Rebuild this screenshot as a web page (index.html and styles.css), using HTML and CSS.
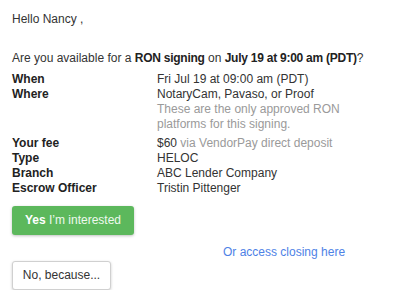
FILE: index.html
```html
<!DOCTYPE html>
<html>
<head>
<meta charset="utf-8">
<link rel="stylesheet" href="styles.css">
</head>
<body>
<div class="mail">
  <p class="greeting">Hello Nancy ,</p>
  <p class="ask">Are you available for a <b>RON signing</b> on <b>July 19 at 9:00 am (PDT)</b>?</p>
  <div class="details">
    <div class="label">When</div>
    <div class="value">Fri Jul 19 at 09:00 am (PDT)</div>
    <div class="label">Where</div>
    <div class="value">NotaryCam, Pavaso, or Proof
      <div class="note">These are the only approved RON<br>platforms for this signing.</div>
    </div>
    <div class="label">Your fee</div>
    <div class="value">$60 <span class="muted">via VendorPay direct deposit</span></div>
    <div class="label">Type</div>
    <div class="value">HELOC</div>
    <div class="label">Branch</div>
    <div class="value">ABC Lender Company</div>
    <div class="label">Escrow Officer</div>
    <div class="value">Tristin Pittenger</div>
  </div>
  <div class="actions">
    <a class="btn btn-yes" href="#"><span class="yes">Yes</span> I’m interested</a>
    <a class="access" href="#">Or access closing here</a>
    <a class="btn btn-no" href="#">No, because...</a>
  </div>
</div>
</body>
</html>
```
FILE: styles.css
```css
html, body {
  margin: 0;
  padding: 0;
  background: #ffffff;
}
.mail {
  font-family: "Liberation Sans", Arial, sans-serif;
  font-size: 12px;
  line-height: 15px;
  color: #333333;
  padding: 12px 0 0 12px;
}
.greeting {
  margin: 0;
}
.ask {
  margin: 24px 0 0 0;
  white-space: nowrap;
}
.ask b {
  color: #222222;
  letter-spacing: -0.25px;
}
.details {
  margin-top: 6px;
  display: grid;
  grid-template-columns: 145px auto;
}
.label {
  font-weight: bold;
  color: #222222;
}
.value {
  color: #333333;
}
.note {
  color: #9a9a9a;
  margin-bottom: 4px;
}
.muted {
  color: #9a9a9a;
}
.actions {
  margin-top: 10px;
  display: flex;
  flex-direction: column;
  align-items: flex-start;
}
.btn {
  display: inline-block;
  text-decoration: none;
  border-radius: 3px;
  box-sizing: border-box;
  height: 29px;
  line-height: 29px;
  font-size: 12px;
}
.btn-yes {
  width: 122px;
  text-align: center;
  background: #5cb85c;
  color: #eef8ee;
  box-shadow: 0 1px 3px rgba(0, 0, 0, 0.25);
}
.yes {
  color: #ffffff;
  font-weight: bold;
}
.access {
  margin: 10px 0 0 211px;
  color: #4e82e6;
  text-decoration: none;
  line-height: 15px;
  font-size: 12px;
}
.btn-no {
  margin-top: 1px;
  width: 99px;
  text-align: center;
  background: #ffffff;
  color: #333333;
  border: 1px solid #d0d0d0;
  line-height: 27px;
  box-shadow: 0 1px 3px rgba(0, 0, 0, 0.2);
}
```
